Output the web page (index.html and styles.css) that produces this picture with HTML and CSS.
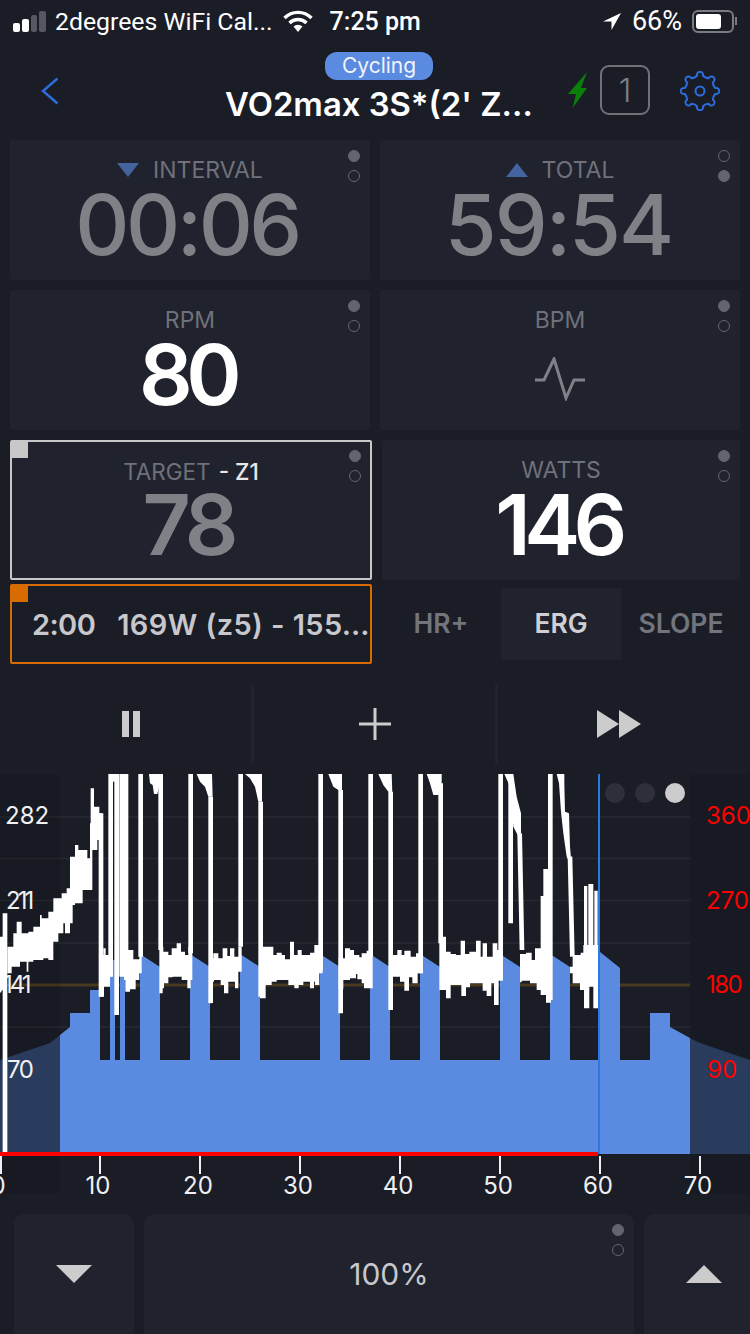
FILE: index.html
```html
<!DOCTYPE html>
<html lang="en">
<head>
<meta charset="utf-8">
<title>Workout</title>
<link rel="stylesheet" href="styles.css">
</head>
<body>
<div class="statusbar">
  <div class="status-left">
    <svg class="signal" width="33" height="21" viewBox="0 0 33 21"><rect x="0" y="12" width="7" height="9" rx="2" fill="#fff"/><rect x="9" y="8" width="7" height="13" rx="2" fill="#fff"/><rect x="18" y="4" width="6" height="17" rx="2" fill="#555862"/><rect x="26" y="0" width="7" height="21" rx="2" fill="#555862"/></svg>
    <span class="carrier">2degrees WiFi Cal...</span>
    <svg class="wifi" width="30" height="22" viewBox="0 0 30 22"><path d="M1.500 8 A19 19 0 0 1 28.500 8" fill="none" stroke="#fff" stroke-width="3.400"/><path d="M6.500 13 A12 12 0 0 1 23.500 13" fill="none" stroke="#fff" stroke-width="3.400"/><path d="M15 22 L10.500 16.500 A6.500 6.500 0 0 1 19.500 16.500Z" fill="#fff"/></svg>
    <span class="clock">7:25 pm</span>
  </div>
  <div class="status-right">
    <svg class="arrow" width="18" height="17" viewBox="0 0 18 17"><path d="M18 0 L0 8.500 H8.500 V17Z" fill="#fff"/></svg>
    <span class="battery-text">66%</span>
    <div class="battery"><div class="battery-fill"></div></div>
    <div class="battery-cap"></div>
  </div>
</div>

<header class="topbar">
  <svg class="back" width="18" height="28" viewBox="0 0 18 28"><path d="M16.500 1.500 L2 14 L16.500 26.500" fill="none" stroke="#2c6cdb" stroke-width="2.500"/></svg>
  <div class="title-wrap">
    <span class="pill">Cycling</span>
    <h1 class="title">VO2max 3S*(2' Z…</h1>
  </div>
  <svg class="bolt" width="22" height="36" viewBox="0 0 22 36"><path d="M19 0 L0 22 H8 L4.700 36 L19 16 H13Z" fill="#0a800a"/></svg>
  <div class="count">1</div>
  <svg class="gear" width="40" height="40" viewBox="0 0 40 40"><path d="M17.040 4.780 A3.100 3.100 0 1 1 22.960 4.780 A8 8 0 0 0 28.670 7.150 A3.100 3.100 0 1 1 32.850 11.330 A8 8 0 0 0 35.220 17.040 A3.100 3.100 0 1 1 35.220 22.960 A8 8 0 0 0 32.850 28.670 A3.100 3.100 0 1 1 28.670 32.850 A8 8 0 0 0 22.960 35.220 A3.100 3.100 0 1 1 17.040 35.220 A8 8 0 0 0 11.330 32.850 A3.100 3.100 0 1 1 7.150 28.670 A8 8 0 0 0 4.780 22.960 A3.100 3.100 0 1 1 4.780 17.040 A8 8 0 0 0 7.150 11.330 A3.100 3.100 0 1 1 11.330 7.150 A8 8 0 0 0 17.040 4.780Z" fill="none" stroke="#2c6cdb" stroke-width="2"/><circle cx="20" cy="20" r="4.500" fill="none" stroke="#2c6cdb" stroke-width="2"/></svg>
</header>

<main class="tiles">
  <section class="tile">
    <div class="tile-label"><svg class="tri" width="22" height="16" viewBox="0 0 22 16"><path d="M0 1 H22 L11 15Z" fill="#4464a0"/></svg><span>INTERVAL</span></div>
    <div class="tile-value muted">00:06</div>
    <div class="dots"><i class="dot on"></i><i class="dot"></i></div>
  </section>
  <section class="tile">
    <div class="tile-label"><svg class="tri" width="22" height="16" viewBox="0 0 22 16"><path d="M0 15 H22 L11 1Z" fill="#4464a0"/></svg><span>TOTAL</span></div>
    <div class="tile-value muted wide">59:54</div>
    <div class="dots"><i class="dot"></i><i class="dot on"></i></div>
  </section>
  <section class="tile">
    <div class="tile-label"><span>RPM</span></div>
    <div class="tile-value strong">80</div>
    <div class="dots"><i class="dot on"></i><i class="dot"></i></div>
  </section>
  <section class="tile">
    <div class="tile-label"><span>BPM</span></div>
    <svg class="pulse" width="52" height="44" viewBox="0 0 52 44"><path d="M1 23 H10 L20 2 L32 41 L40 23 H51" fill="none" stroke="#808186" stroke-width="3"/></svg>
    <div class="dots"><i class="dot on"></i><i class="dot"></i></div>
  </section>
</main>

<div class="tiles-wide">
  <section class="tile tile-target">
    <i class="corner corner-grey"></i>
    <div class="tile-label"><span>TARGET</span><b class="zone">- Z1</b></div>
    <div class="tile-value muted semi">78</div>
    <div class="dots"><i class="dot on"></i><i class="dot"></i></div>
  </section>
  <section class="tile">
    <div class="tile-label"><span>WATTS</span></div>
    <div class="tile-value strong">146</div>
    <div class="dots"><i class="dot on"></i><i class="dot"></i></div>
  </section>
</div>

<div class="mode-row">
  <div class="next-step">
    <i class="corner corner-orange"></i>
    <span class="step-time">2:00</span><span class="step-text">169W (z5) - 155…</span>
  </div>
  <div class="modes">
    <span class="mode">HR+</span>
    <span class="mode mode-on">ERG</span>
    <span class="mode">SLOPE</span>
  </div>
</div>

<div class="controls">
  <div class="control"><svg width="18" height="26" viewBox="0 0 18 26"><rect x="0" y="0" width="7" height="26" fill="#ccc"/><rect x="11" y="0" width="7" height="26" fill="#ccc"/></svg></div>
  <div class="control"><svg width="32" height="32" viewBox="0 0 32 32"><path d="M16 0 V32 M0 16 H32" stroke="#ccc" stroke-width="3"/></svg></div>
  <div class="control"><svg width="44" height="28" viewBox="0 0 44 28"><path d="M0 0 L22 14 L0 28Z M22 0 L44 14 L22 28Z" fill="#ccc"/></svg></div>
</div>

<svg class="chart" width="750" height="426" viewBox="0 774 750 426">
  <g class="grid-lines">
    <path d="M0 817 H690 M0 858.500 H690 M0 900.500 H690 M0 943 H690 M0 1027 H690"/>
  </g>
  <path d="M0 985 H690" class="threshold"/>
  <path class="area" d="M60 1154 V1035 L70 1027 V1013 H90 V990 H100 V1060 H110 V960 H115 V1060 H120 V938 H125 V1060 H140 V954 L160 967 V1060 H190 V954 L210 967 V1060 H240 V954 L260 967 V1060 H320 V954 L340 967 V1060 H370 V954 L390 967 V1060 H420 V954 L440 967 V1060 H500 V954 L520 967 V1060 H550 V954 L570 967 V1060 H600 V952 L620 968 V1060 H650 V1013 H670 V1027 L690 1038 V1154Z"/>
  <path class="area-dim" d="M0 1154 V1060 L50 1043 L60 1035 V1154Z M690 1154 V1038 L700 1043 L750 1060 V1154Z"/>
  <rect class="shade" x="0" y="774" width="60" height="420"/>
  <rect class="shade" x="690" y="774" width="60" height="420"/>

  <g class="y-left">
    <text x="5" y="824">282</text>
    <text class="tight" x="6" y="909">211</text>
    <text class="tight" x="3" y="993">141</text>
    <text class="tight-small" x="7" y="1078">70</text>
  </g>
  <g class="y-right">
    <text x="706" y="824">360</text>
    <text x="706" y="909">270</text>
    <text class="tight-small" x="706" y="993">180</text>
    <text x="707" y="1078">90</text>
  </g>

  <g class="trace" transform="translate(0 770) scale(.33333)">
    <path class="solid" d="M8 430 H22 V1152 H8Z M0 500 H22 V640 L0 670Z"/>
    <path class="solid" d="M22 530 H40 V490 H50 V455 H65 V490 H85 V485 H100 V470 H120 V435 H125 V445 H145 V425 H160 V385 H185 V370 H200 V355 H210 V260 H225 V225 H235 V240 H262 V265 H270 V160 H272 V55 H282 V110 H298 V130 H305 V210 H292 V240 H277 V360 H248 V400 H225 V405 H218 V460 H210 V490 H195 V460 H190 V490 H175 V515 H160 V570 H145 V565 H130 V570 H100 V575 H85 V605 H80 V575 H60 V590 H35 V610 H22Z"/>
    <path class="solid" d="M328 12 H352 V35 H328Z"/>
    <path class="solid" d="M447 12 H485 L488 40 H480 L472 72 H462 L458 45 L450 40Z"/>
    <path class="solid" d="M590 12 H636 L638 80 H625 L615 50 L600 35Z"/>
    <path class="solid" d="M735 12 H786 V95 H775 L765 50 L750 25Z"/>
    <path class="solid" d="M985 12 H1026 V60 H1015 L1000 50Z"/>
    <path d="M303 130 V680 M332 12 V620 M350 12 V735 M365 12 V620 M378 12 V600 M422 12 V560 M482 12 V540 M572 12 V550 M632 80 V699 M722 12 V530 M782 95 V680 M962 12 V600 M1022 60 V730 M1112 12 V560"/>
  </g>
  <g class="trace" transform="translate(100 930) scale(.33333)">
    <path class="solid" d="M0 75 H10 V55 H17 V75 H36 V140 H30 V170 H12 V200 H0Z"/>
    <path class="solid" d="M72 60 H100 V88 H118 V75 H125 V130 H118 V150 H107 V178 H90 V185 H76 V150 H72Z"/>
    <path class="solid" d="M178 50 H190 V65 H205 V75 H215 V55 H230 V40 H243 V65 H255 V75 H265 V50 H277 V150 H272 V175 H262 V150 H245 V140 H218 V142 H205 V160 H192 V175 H188 V190 H178Z"/>
    <path class="solid" d="M328 85 H340 V70 H355 V85 H368 V55 H382 V78 H390 V55 H403 V80 H415 V50 H425 V125 H415 V175 H405 V155 H385 V190 H372 V165 H362 V150 H342 V155 H335 V220 H328Z"/>
    <path class="solid" d="M480 50 H520 V75 H530 V68 H545 V75 H555 V88 H570 V35 H582 V75 H593 V60 H605 V75 H630 V68 H643 V45 H668 V130 H658 V165 H645 V155 H642 V175 H630 V155 H610 V165 H596 V175 H583 V165 H565 V150 H530 V155 H515 V165 H497 V205 H480Z"/>
    <path class="solid" d="M716 85 H735 V55 H750 V150 H730 V178 H716Z"/>
  </g>
  <g class="trace" transform="translate(350 930) scale(.33333)">
    <path class="solid" d="M0 60 H12 V75 H28 V82 H35 V70 H50 V62 H68 V175 H42 V160 H35 V148 H22 V132 H18 V145 H0Z"/>
    <path class="solid" d="M118 75 H142 V60 H155 V75 H163 V62 H182 V80 H198 V70 H217 V130 H203 V160 H187 V142 H177 V182 H163 V155 H150 V140 H118Z"/>
    <path class="solid" d="M268 20 H288 V65 H302 V72 H318 V75 H332 V32 H345 V72 H358 V65 H378 V32 H392 V80 H398 V40 H411 V80 H428 V40 H442 V60 H458 V152 H446 V225 H432 V160 H424 V198 H410 V182 H398 V160 H360 V172 H348 V198 H334 V165 H302 V205 H288 V180 H268Z"/>
    <path class="solid" d="M510 72 H528 V68 H545 V90 H555 V55 H582 V70 H603 V218 H588 V195 H572 V180 H560 V160 H540 V152 H515 V157 H510Z"/>
    <path class="solid" d="M660 110 H668 V75 H692 V68 H700 V45 H745 V235 H730 V170 H718 V235 H702 V180 H690 V160 H668 V130 H660Z"/>
  </g>
  <g class="trace" transform="translate(375 770) scale(.33333)">
    <path class="solid" d="M10 12 H50 L52 70 L40 65 L25 45Z"/>
    <path class="solid" d="M155 12 H200 V40 L190 75 H175 L165 40Z"/>
    <path class="solid" d="M497 560 V378 H505 V297 H522 L530 560Z"/>
    <path class="solid" d="M388 12 H415 L425 80 L438 130 V190 L428 195 L415 170 L405 50Z"/>
    <path class="solid" d="M545 12 H568 V40 L570 125 L582 130 L585 230 L590 290 L575 260 L565 190 L558 125 L552 40Z"/>
    <path class="solid" d="M627 560 V348 H637 V560Z M640 560 V342 H655 V560Z M658 560 V362 H668 V560Z"/>
    <path d="M47 65 V720 M137 12 V610 M197 40 V520 M377 12 V630 M407 12 V460 M434 190 L441 540 M526 12 V690 M585 260 L592 560"/>
  </g>

  <rect class="progress" x="0" y="1152" width="598" height="4"/>
  <rect class="cursor" x="598" y="774" width="2" height="380"/>
  <path class="ticks" d="M1 1156 V1174 M100 1156 V1174 M200 1156 V1174 M300 1156 V1174 M400 1156 V1174 M500 1156 V1174 M600 1156 V1174 M700 1156 V1174"/>
  <g class="x-axis">
    <text x="-2" y="1194">0</text>
    <text x="98" y="1194">10</text>
    <text x="198" y="1194">20</text>
    <text x="298" y="1194">30</text>
    <text x="398" y="1194">40</text>
    <text x="498" y="1194">50</text>
    <text x="598" y="1194">60</text>
    <text x="698" y="1194">70</text>
  </g>
  <circle class="page-dot" cx="615" cy="793" r="10"/>
  <circle class="page-dot" cx="645" cy="793" r="10"/>
  <circle class="page-dot page-dot-on" cx="675" cy="793" r="10"/>
</svg>

<footer class="bottom">
  <div class="bottom-btn"><svg width="36" height="18" viewBox="0 0 36 18"><path d="M0 0 H36 L18 18Z" fill="#ccc"/></svg></div>
  <div class="bottom-btn bottom-mid">
    <span>100%</span>
    <div class="dots"><i class="dot on"></i><i class="dot"></i></div>
  </div>
  <div class="bottom-btn"><svg width="36" height="18" viewBox="0 0 36 18"><path d="M0 18 H36 L18 0Z" fill="#ccc"/></svg></div>
</footer>
</body>
</html>
```
FILE: styles.css
```css
* { box-sizing: border-box; }
html, body { margin: 0; padding: 0; }
body {
  width: 750px;
  height: 1334px;
  overflow: hidden;
  background: #1a1d26;
  color: #fff;
  font-family: Inter, "Noto Sans", sans-serif;
}
.statusbar {
  height: 40px;
  display: flex;
  justify-content: space-between;
  align-items: center;
  padding: 2px 13px 0 13px;
  font-family: Roboto, sans-serif;
}
.status-left, .status-right { display: flex; align-items: center; }
.carrier { margin-left: 9px; font-size: 24.800px; white-space: nowrap; }
.wifi { margin-left: 10px; }
.clock { margin-left: 17px; font-size: 25px; font-weight: 500; }
.battery-text { margin-left: 11px; font-size: 27px; }
.battery {
  margin-left: 10px;
  width: 42px;
  height: 23px;
  padding: 2px;
  border: 2px solid #7a7c84;
  border-radius: 6px;
}
.battery-fill { width: 25px; height: 15px; background: #fff; border-radius: 3px; }
.battery-cap { width: 2px; height: 8px; background: #7a7c84; margin-left: 1px; }

.topbar {
  height: 100px;
  display: flex;
  align-items: flex-start;
  position: relative;
  padding: 37px 0 0 41px;
}
.title-wrap {
  position: absolute;
  left: 150px;
  top: 12px;
  width: 458px;
  display: flex;
  flex-direction: column;
  align-items: center;
}
.pill {
  height: 28px;
  line-height: 28px;
  padding: 0 17px;
  border-radius: 12px;
  background: #5b8be0;
  font-size: 21px;
  color: #f0f3fa;
}
.title { margin: 6px 0 0; font-size: 32.800px; line-height: 36px; font-weight: 600; white-space: nowrap; }
.bolt { margin-left: 509px; margin-top: -5px; }
.count {
  margin-left: 10px;
  margin-top: -12px;
  width: 50px;
  height: 50px;
  border: 2px solid #6f7178;
  border-radius: 9px;
  display: flex;
  align-items: center;
  justify-content: center;
  font-size: 32px;
  font-weight: 300;
  color: #7d7f86;
}
.gear { margin-left: 30px; margin-top: -6px; }

.tiles {
  display: grid;
  grid-template-columns: 360px 360px;
  grid-auto-rows: 140px;
  gap: 10px;
  padding-left: 10px;
}
.tiles-wide {
  display: grid;
  grid-template-columns: 362px 358px;
  grid-auto-rows: 140px;
  gap: 10px;
  padding-left: 10px;
  margin-top: 10px;
}
.tile {
  position: relative;
  background: #20222e;
  border-radius: 3px;
  display: flex;
  flex-direction: column;
  align-items: center;
}
.tile-label {
  margin-top: 17px;
  height: 26px;
  display: flex;
  align-items: center;
  gap: 14px;
  font-size: 23px;
  line-height: 26px;
  color: #6f717a;
}
.tri { flex: none; }
.tile-value { font-size: 84px; line-height: 84px; letter-spacing: -3.500px; padding-right: 6px; }
.muted { color: #808186; font-weight: 500; }
.wide { letter-spacing: -2px; padding-right: 3px; }
.semi { font-weight: 600; letter-spacing: -5px; }
.strong { color: #fff; font-weight: 600; letter-spacing: -6.500px; }
.pulse { margin-top: 24px; }
.dots {
  position: absolute;
  top: 10px;
  right: 10px;
  display: flex;
  flex-direction: column;
  gap: 8px;
}
.dot {
  display: block;
  width: 12px;
  height: 12px;
  border-radius: 50%;
  border: 1.500px solid #63656e;
}
.dot.on { background: #63656e; }
.tile-target { border: 2px solid #c8c8c8; border-radius: 2px; }
.tile-target .tile-label { margin-top: 17px; gap: 8px; font-size: 22.500px; }
.tile-target .tile-value { margin-top: -2px; }
.tile-target .dots { top: 8px; right: 9px; }
.zone { font-weight: 500; color: #e8e8e8; }
.corner { position: absolute; left: 0; top: 0; width: 16px; height: 16px; display: block; }
.corner-grey { background: #c8c8c8; }
.corner-orange { background: #d86c00; }

.mode-row {
  display: grid;
  grid-template-columns: 362px 360px;
  gap: 9px;
  padding-left: 10px;
  margin-top: 4px;
  height: 80px;
}
.next-step {
  position: relative;
  height: 80px;
  border: 2px solid #d86c00;
  border-radius: 2px;
  display: flex;
  align-items: center;
  padding-left: 20px;
  font-size: 29px;
  font-weight: 600;
  color: #c8c8cc;
  white-space: nowrap;
  overflow: hidden;
}
.step-time { letter-spacing: -.6px; }
.step-text { margin-left: 22px; letter-spacing: .4px; }
.modes {
  display: grid;
  grid-template-columns: repeat(3, 120px);
  height: 72px;
  margin-top: 4px;
}
.mode {
  display: flex;
  align-items: center;
  justify-content: center;
  padding-bottom: 3px;
  font-size: 26.500px;
  font-weight: 600;
  color: #73757c;
}
.mode-on { background: #20222e; color: #d0d0d4; }

.controls {
  display: grid;
  grid-template-columns: 241px 244px 245px;
  height: 80px;
  margin: 20px 0 10px 10px;
  width: 730px;
}
.control {
  display: flex;
  align-items: center;
  justify-content: center;
  border-left: 3px solid #20222e;
}
.control:first-child { border-left: 0; }

.chart { display: block; }
.grid-lines path { stroke: #282a33; stroke-width: 1.500; fill: none; }
.threshold { stroke: #49391f; stroke-width: 3; fill: none; }
.area { fill: #5b8be0; }
.area-dim { fill: #2f4368; }
.shade { fill: rgba(0, 0, 0, .1); }
.y-left text, .y-right text, .x-axis text { font-family: Inter, sans-serif; font-size: 24px; }
.y-left text, .x-axis text { fill: #f0f0f2; }
.y-left .tight { letter-spacing: -3px; }
.tight-small { letter-spacing: -1.500px; }
.x-axis text { text-anchor: middle; }
.y-right text { fill: #f00; }
.trace path { stroke: #fff; stroke-width: 14; fill: none; }
.trace path.solid { fill: #fff; stroke: none; }
.progress { fill: #f00; }
.cursor { fill: #2a78e4; }
.ticks { stroke: #f0f0f2; stroke-width: 2; fill: none; }
.page-dot { fill: #2d3039; }
.page-dot-on { fill: #ccc; }

.bottom {
  display: grid;
  grid-template-columns: 120px 490px 120px;
  gap: 10px;
  height: 120px;
  margin-top: 14px;
  padding-left: 14px;
}
.bottom-btn {
  position: relative;
  background: #20222e;
  border-radius: 10px 10px 0 0;
  display: flex;
  align-items: center;
  justify-content: center;
}
.bottom-mid { font-size: 30px; color: #c8c8cc; }
```
